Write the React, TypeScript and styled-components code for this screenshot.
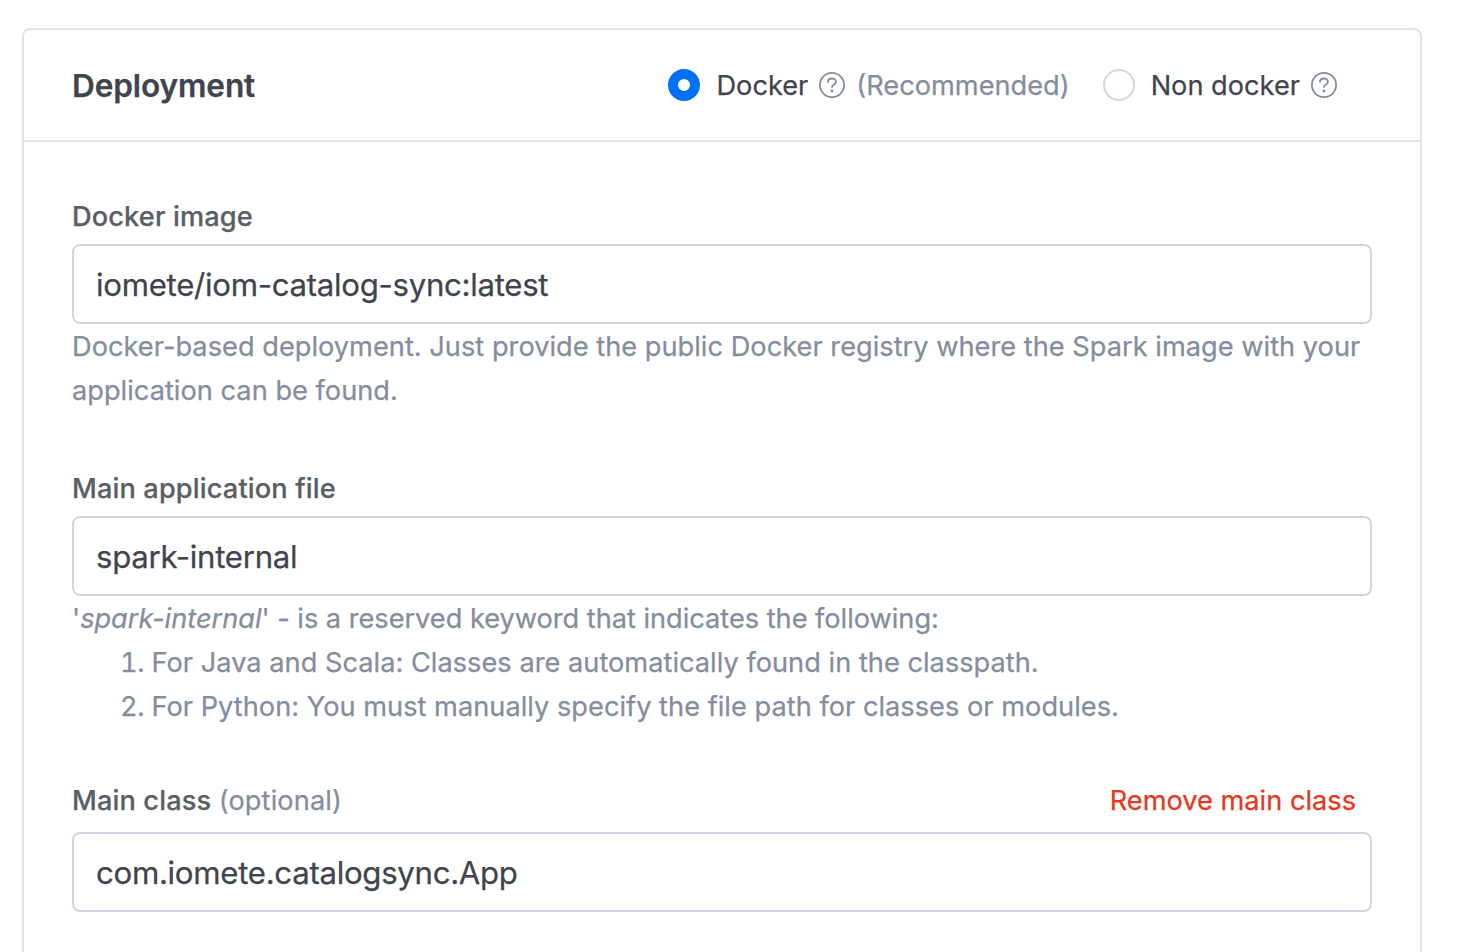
import React from "react";
import styled, { createGlobalStyle } from "styled-components";

const Global = createGlobalStyle`
  *, *::before, *::after { box-sizing: border-box; }
  html, body { margin: 0; background: #fff; }
  body {
    height: 952px;
    overflow: hidden;
    font-family: Inter, "Liberation Sans", sans-serif;
    color: #3f444d;
    -webkit-text-stroke: 0.25px currentColor;
  }
`;

const Page = styled.main`
  height: 952px;
  overflow: hidden;
  padding: 28px 54px 0 22px;
`;

const Card = styled.section`
  width: 1400px;
  height: 1000px;
  border: 2px solid #e2e3e9;
  border-radius: 8px;
`;

const Header = styled.header`
  display: flex;
  align-items: center;
  justify-content: space-between;
  height: 112px;
  padding: 0 82px 0 48px;
  border-bottom: 2px solid #e2e3e9;
`;

const Title = styled.h2`
  margin: 0;
  padding-top: 1px;
  font-size: 31.6px;
  font-weight: 600;
  line-height: 44px;
  letter-spacing: -0.12px;
`;

const Options = styled.div`
  display: flex;
  align-items: center;
  gap: 33px;
  font-size: 27.2px;
  line-height: 44px;
`;

const Option = styled.label`
  display: flex;
  align-items: center;
`;

const OptionText = styled.span`
  padding-top: 2px;
`;

const Radio = styled.span<{ $on?: boolean }>`
  width: 32px;
  height: 32px;
  margin-right: 16px;
  border-radius: 50%;
  border: ${(p) => (p.$on ? "10px solid #0070f8" : "2px solid #d0d6e2")};
  background: #fff;
`;

const Help = styled.svg`
  width: 28px;
  height: 28px;
  margin-left: 10px;
  color: #848d9e;
`;

const Muted = styled.span`
  color: #848d9e;
  font-weight: 400;
  -webkit-text-stroke-color: #848d9e;
`;

const Note = styled(OptionText)`
  margin-left: 10px;
  color: #848d9e;
  -webkit-text-stroke-color: #848d9e;
`;

const Body = styled.div`
  padding: 53px 48px 0;
`;

const Field = styled.div<{ $top?: number }>`
  margin-top: ${(p) => p.$top ?? 0}px;
`;

const LabelRow = styled.div<{ $gap?: number }>`
  display: flex;
  justify-content: space-between;
  padding-right: 16px;
  margin-bottom: ${(p) => p.$gap ?? 5}px;
  font-size: 27.2px;
  font-weight: 500;
  line-height: 44px;
  letter-spacing: 0.13px;
  color: #5a5f66;
  -webkit-text-stroke-color: #5a5f66;
`;

const Input = styled.div`
  height: 80px;
  padding: 0 22px;
  border: 2px solid #d0d5e1;
  border-radius: 8px;
  font-size: 31.2px;
  line-height: 78px;
  letter-spacing: -0.3px;
`;

const Hint = styled.div`
  padding-top: 1px;
  font-size: 27.2px;
  line-height: 44px;
  letter-spacing: 0.02px;
  color: #848d9e;
  -webkit-text-stroke-color: #848d9e;
`;

const Keyword = styled.div`
  letter-spacing: -0.02px;
`;

const List = styled.ol`
  margin: 0;
  padding: 0 0 0 48px;
  list-style: none;
`;

const Item = styled.li`
  display: flex;
`;

const Marker = styled.span`
  width: 31.5px;
  font-variant-numeric: tabular-nums;
  letter-spacing: -0.3px;
`;

const Remove = styled.span`
  color: #e63820;
  font-weight: 400;
  letter-spacing: 0;
  -webkit-text-stroke-color: #e63820;
`;

const HelpIcon = () => (
  <Help viewBox="0 0 28 28" fill="none" stroke="currentColor" strokeWidth="1.8" strokeLinecap="round">
    <circle cx="14" cy="14" r="12.1" />
    <path d="M9.9 10.9C10 8.8 11.6 7.5 13.9 7.5s4.1 1.4 4.1 3.3c0 2.6-4 2.6-4 5.3" />
    <circle cx="13.9" cy="20" r="1.4" fill="currentColor" stroke="none" />
  </Help>
);

export default function App() {
  return (
    <>
      <Global />
      <Page>
        <Card>
          <Header>
            <Title>Deployment</Title>
            <Options>
              <Option><Radio $on /><OptionText>Docker</OptionText><HelpIcon /><Note>(Recommended)</Note></Option>
              <Option><Radio /><OptionText>Non docker</OptionText><HelpIcon /></Option>
            </Options>
          </Header>
          <Body>
            <Field>
              <LabelRow>Docker image</LabelRow>
              <Input>iomete/iom-catalog-sync:latest</Input>
              <Hint>
                Docker-based deployment. Just provide the public Docker registry where the Spark image with your
                application can be found.
              </Hint>
            </Field>
            <Field $top={54}>
              <LabelRow>Main application file</LabelRow>
              <Input>spark-internal</Input>
              <Hint>
                <Keyword>'<em>spark-internal</em>' - is a reserved keyword that indicates the following:</Keyword>
                <List>
                  <Item><Marker>1.</Marker>For Java and Scala: Classes are automatically found in the classpath.</Item>
                  <Item><Marker>2.</Marker>For Python: You must manually specify the file path for classes or modules.</Item>
                </List>
              </Hint>
            </Field>
            <Field $top={50}>
              <LabelRow $gap={9}>
                <span>Main class <Muted>(optional)</Muted></span>
                <Remove>Remove main class</Remove>
              </LabelRow>
              <Input>com.iomete.catalogsync.App</Input>
            </Field>
          </Body>
        </Card>
      </Page>
    </>
  );
}
